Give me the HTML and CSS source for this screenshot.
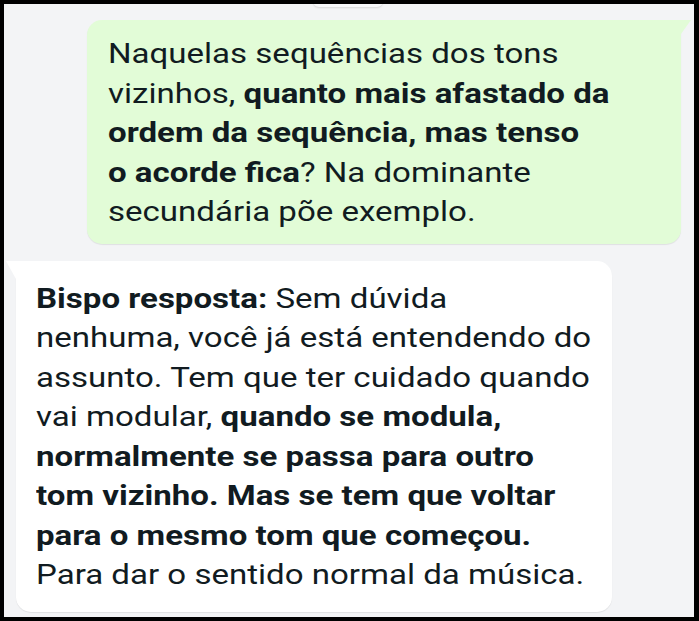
FILE: index.html
```html
<!DOCTYPE html>
<html>
<head>
  <title>Conversa</title>
  <link rel="stylesheet" href="styles.css">
</head>
<body>

<div class="screen">
  <div class="pill"></div>

  <div class="msg msg-out">
    <p class="msg-text">
      Naquelas sequências dos tons<br>
      vizinhos, <b>quanto mais afastado da<br>
      ordem da sequência, mas tenso<br>
      o acorde fica</b>? Na dominante<br>
      secundária põe exemplo.
    </p>
  </div>

  <div class="msg msg-in">
    <p class="msg-text">
      <b>Bispo resposta:</b> Sem dúvida<br>
      nenhuma, você já está entendendo do<br>
      assunto. Tem que ter cuidado quando<br>
      vai modular, <b>quando se modula,<br>
      normalmente se passa para outro<br>
      tom vizinho. Mas se tem que voltar<br>
      para o mesmo tom que começou.</b><br>
      Para dar o sentido normal da música.
    </p>
  </div>
</div>

</body>
</html>
```

FILE: styles.css
```css
html, body {
  margin: 0;
  background: #000;
}

.screen {
  margin: 4px 5px 4px 4px;
  height: 613px;
  background: #f3f4f6;
  overflow: hidden;
  font-family: Roboto, "Noto Sans", sans-serif;
  font-size: 28px;
  line-height: 39.5px;
  color: #111b21;
}

.pill {
  width: 70px;
  height: 10px;
  margin: -7px 0 0 309px;
  background: #f7f8fa;
  border-radius: 0 0 6px 6px;
  box-shadow: 0 1px 2px rgba(0, 0, 0, 0.12);
}

.msg {
  position: relative;
  border-radius: 15px;
  box-shadow: 0 1px 1px rgba(0, 0, 0, 0.08);
}

/* the screenshot is stretched sideways a little */
.msg-text {
  margin: 0;
  white-space: nowrap;
  transform: scaleX(1.18);
  transform-origin: left center;
}

.msg b {
  font-weight: 700;
}

.msg-out {
  margin: 13px 13px 0 83px;
  padding: 14px 20px 12px 21px;
  background: #e2fcd7;
  border-top-right-radius: 0;
}

.msg-out::after {
  content: "";
  position: absolute;
  top: 0;
  right: -10px;
  border-top: 14px solid #e2fcd7;
  border-right: 10px solid transparent;
}

.msg-in {
  width: 557px;
  margin: 17px 0 0 12px;
  padding: 18px 19px 17px 20px;
  background: #fff;
  border-top-left-radius: 0;
}

.msg-in::before {
  content: "";
  position: absolute;
  top: 0;
  left: -10px;
  border-top: 18px solid #fff;
  border-left: 10px solid transparent;
}
```
